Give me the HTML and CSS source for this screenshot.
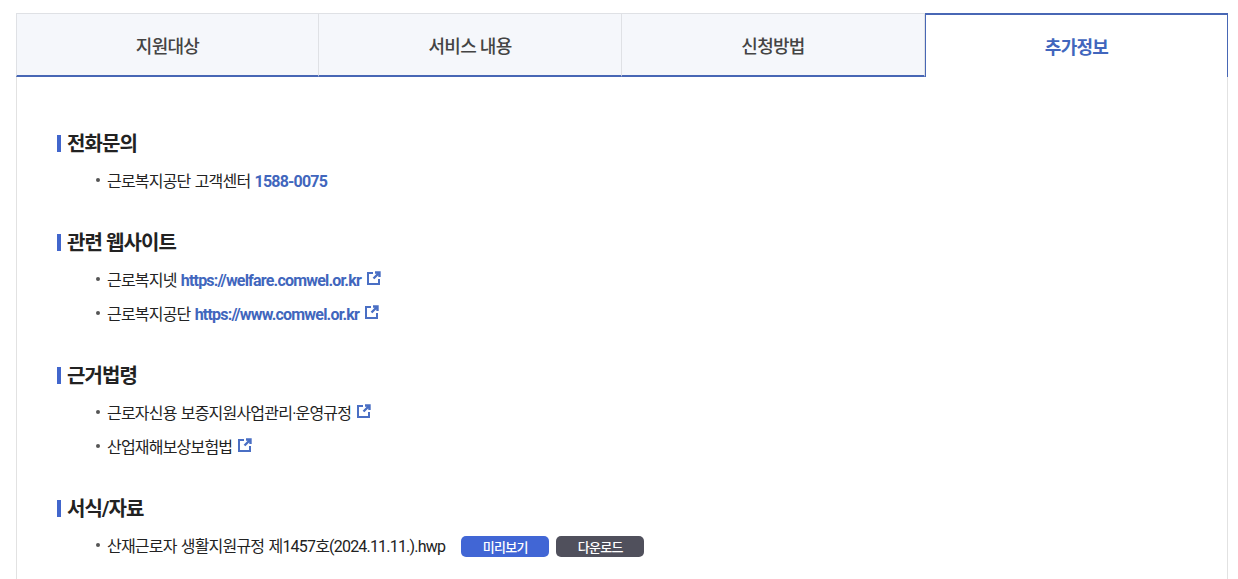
FILE: index.html
```html
<!DOCTYPE html>
<html lang="ko">
<head>
    <meta charset="utf-8">
    <title>추가정보</title>
    <link rel="stylesheet" href="styles.css">
</head>
<body>
    <div class="wrap">
        <ul class="tabs">
            <li class="tab">지원대상</li>
            <li class="tab">서비스 내용</li>
            <li class="tab">신청방법</li>
            <li class="tab active">추가정보</li>
        </ul>
        <div class="panel">
            <section class="sec">
                <h3 class="sec-title">전화문의</h3>
                <ul class="items">
                    <li class="item"><span>근로복지공단 고객센터 <a class="link">1588-0075</a></span></li>
                </ul>
            </section>
            <section class="sec">
                <h3 class="sec-title">관련 웹사이트</h3>
                <ul class="items">
                    <li class="item"><span>근로복지넷 <a class="link">https://welfare.comwel.or.kr</a></span>
                        <svg class="ext" viewBox="0 0 14 14"><path d="M6 2H1v11h11V8"/><path class="arrow" d="M8 1.5h4.5V6M12 2L6.5 7.5"/></svg>
                    </li>
                    <li class="item"><span>근로복지공단 <a class="link">https://www.comwel.or.kr</a></span>
                        <svg class="ext" viewBox="0 0 14 14"><path d="M6 2H1v11h11V8"/><path class="arrow" d="M8 1.5h4.5V6M12 2L6.5 7.5"/></svg>
                    </li>
                </ul>
            </section>
            <section class="sec">
                <h3 class="sec-title">근거법령</h3>
                <ul class="items">
                    <li class="item"><span>근로자신용 보증지원사업관리·운영규정</span>
                        <svg class="ext" viewBox="0 0 14 14"><path d="M6 2H1v11h11V8"/><path class="arrow" d="M8 1.5h4.5V6M12 2L6.5 7.5"/></svg>
                    </li>
                    <li class="item"><span>산업재해보상보험법</span>
                        <svg class="ext" viewBox="0 0 14 14"><path d="M6 2H1v11h11V8"/><path class="arrow" d="M8 1.5h4.5V6M12 2L6.5 7.5"/></svg>
                    </li>
                </ul>
            </section>
            <section class="sec">
                <h3 class="sec-title">서식/자료</h3>
                <ul class="items">
                    <li class="item"><span>산재근로자 생활지원규정 제1457호(2024.11.11.).hwp</span>
                        <span class="btns">
                            <a class="btn btn-blue">미리보기</a>
                            <a class="btn btn-dark">다운로드</a>
                        </span>
                    </li>
                </ul>
            </section>
        </div>
    </div>
</body>
</html>
```

FILE: styles.css
```css
* {
    box-sizing: border-box;
}
body {
    margin: 0;
    background-color: #fff;
    color: #222;
    font-family: Roboto, "Noto Sans CJK KR", sans-serif;
    height: 579px;
    overflow: hidden;
}
ul {
    list-style: none;
    margin: 0;
    padding: 0;
}
.wrap {
    width: 1212px;
    margin: 13px 0 0 16px;
}
.tabs {
    display: flex;
    height: 64px;
}
.tab {
    width: 303px;
    display: flex;
    align-items: center;
    justify-content: center;
    background-color: #f5f7fb;
    border: 1px solid #dfe1e5;
    border-left: none;
    border-bottom: 2px solid #4867b5;
    color: #444;
    font-size: 18px;
    font-weight: 500;
    letter-spacing: -0.7px;
}
.tab:first-child {
    border-left: 1px solid #dfe1e5;
}
.tab.active {
    background-color: #fff;
    border: 2px solid #4867b5;
    border-right-width: 1px;
    border-left-width: 1px;
    border-bottom: none;
    color: #4166bd;
    font-weight: 700;
}
.panel {
    border-left: 1px solid #e2e2e2;
    border-right: 1px solid #e2e2e2;
    padding: 53px 40px 0;
    height: 502px;
}
.sec {
    margin-bottom: 31px;
}
.sec-title {
    margin: 0 0 6px;
    padding-left: 10px;
    position: relative;
    font-size: 20px;
    line-height: 28px;
    font-weight: 700;
    color: #222;
    letter-spacing: -0.9px;
}
.sec-title::before {
    content: "";
    position: absolute;
    left: 0;
    top: 5px;
    width: 4px;
    height: 17px;
    background-color: #4166cc;
}
.items {
    padding-left: 50px;
}
.item {
    position: relative;
    display: flex;
    align-items: center;
    height: 34px;
    padding-bottom: 2px;
    font-size: 16px;
    letter-spacing: -0.8px;
    word-spacing: 1px;
    color: #222;
    white-space: pre-wrap;
}
.item::before {
    content: "";
    position: absolute;
    left: -11px;
    top: 14px;
    width: 4px;
    height: 4px;
    border-radius: 50%;
    background-color: #555;
}
.link {
    color: #4166bd;
    font-weight: 700;
}
.ext {
    width: 14px;
    height: 14px;
    margin: -2px 0 0 6px;
    fill: none;
    stroke: #4a6fc4;
    stroke-width: 2;
}
.ext .arrow {
    stroke-width: 2.4;
}
.btns {
    display: flex;
    gap: 7px;
    margin: 2px 0 0 16px;
}
.btn {
    width: 88px;
    height: 21px;
    display: flex;
    align-items: center;
    justify-content: center;
    border-radius: 5px;
    color: #fff;
    font-size: 13px;
    font-weight: 500;
    letter-spacing: -0.7px;
}
.btn-blue {
    background-color: #4166d5;
}
.btn-dark {
    background-color: #50505c;
}
```
